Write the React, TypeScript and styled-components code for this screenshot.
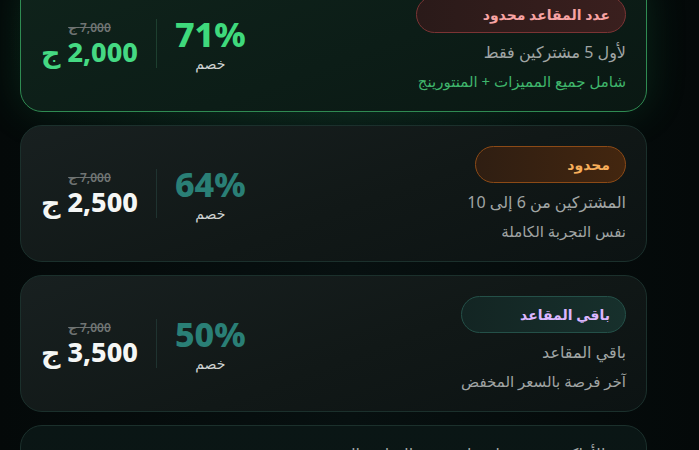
import React from 'react'
import styled, { createGlobalStyle, css } from 'styled-components'

type Tone = 'best' | 'normal'

type Plan = {
  badge: string,
  badgeKind: 'hot' | 'limited' | 'last',
  badgeWidth: number,
  line1: string,
  line2: string,
  discount: string,
  price: string,
  tone: Tone,
}

const plans: Plan[] = [
  {
    badge: 'عدد المقاعد محدود',
    badgeKind: 'hot',
    badgeWidth: 210,
    line1: 'لأول 5 مشتركين فقط',
    line2: 'شامل جميع المميزات + المنتورينج',
    discount: '71%',
    price: '2,000',
    tone: 'best',
  },
  {
    badge: 'محدود',
    badgeKind: 'limited',
    badgeWidth: 151,
    line1: 'المشتركين من 6 إلى 10',
    line2: 'نفس التجربة الكاملة',
    discount: '64%',
    price: '2,500',
    tone: 'normal',
  },
  {
    badge: 'باقي المقاعد',
    badgeKind: 'last',
    badgeWidth: 165,
    line1: 'باقي المقاعد',
    line2: 'آخر فرصة بالسعر المخفض',
    discount: '50%',
    price: '3,500',
    tone: 'normal',
  },
]

const badgeColors = {
  hot: { bg: 'linear-gradient(90deg, #2a1a19, #3a1f1e)', border: '#7b3434', text: '#f7a3a3' },
  limited: { bg: 'linear-gradient(90deg, #2f1e12, #43260f)', border: '#8c4a16', text: '#f7ae5a' },
  last: { bg: 'linear-gradient(90deg, #132523, #17302c)', border: '#245048', text: '#dcb6ff' },
}

export default function App() {
  return (
    <>
      <GlobalStyle />
      <Page dir='rtl'>
        <List>
          {plans.map(p => (
            <Card key={p.price} tone={p.tone}>
              <Info>
                <Badge kind={p.badgeKind} w={p.badgeWidth}>{p.badge}</Badge>
                <Line1>{p.line1}</Line1>
                <Line2 tone={p.tone}>{p.line2}</Line2>
              </Info>

              <Deal>
                <Discount>
                  <Percent tone={p.tone}>{p.discount}</Percent>
                  <Off>خصم</Off>
                </Discount>
                <Divider tone={p.tone} />
                <PriceBox>
                  <OldPrice>7,000 ج</OldPrice>
                  <Price tone={p.tone}>{p.price} ج</Price>
                </PriceBox>
              </Deal>
            </Card>
          ))}

          <Card tone='normal' top>
            <Feature>
              <Check>✓</Check>
              الأماكن محدودة لضمان جودة المتابعة الفردية
            </Feature>
          </Card>
        </List>
      </Page>
    </>
  )
}

const GlobalStyle = createGlobalStyle`
  html, body { margin:0; padding:0; background:#050b0b; overflow:hidden; }
  body { font-family:"Noto Sans", "DejaVu Sans", sans-serif; }
`

const Page = styled.div`
  width:699px; height:450px; overflow:hidden;
  background:
    radial-gradient(ellipse 420px 200px at 300px 40px, rgba(30,110,70,0.22), transparent 70%),
    linear-gradient(90deg, #040909 0%, #071010 50%, #040909 100%);
`

// list is scrolled so the first card sits partly above the fold
const List = styled.div`
  display:flex; flex-direction:column; gap:13px;
  margin-top:-25px; padding:0 52px 0 20px; box-sizing:border-box; width:699px;
`

const Card = styled.div<{ tone: Tone, top?: boolean }>`
  display:flex; align-items:${p => p.top ? 'flex-start' : 'center'}; justify-content:space-between;
  height:137px; box-sizing:border-box; padding:0 20px;
  border-radius:22px; flex-shrink:0;
  border:1px solid #1b302c;
  background:linear-gradient(160deg, #182020 0%, #111817 55%, #0c1313 100%);
  ${p => p.tone == 'best' && css`
    border-color:#2f8b52;
    background:linear-gradient(160deg, #0f231b 0%, #0c1d17 55%, #0a1813 100%);
    box-shadow:0 0 40px rgba(34,160,90,0.18);
  `}
  ${p => p.top && css`
    padding-top:17px;
    background:linear-gradient(180deg, #0a1615 0%, #0c1514 100%);
  `}
`

const Info = styled.div` display:flex; flex-direction:column; align-items:flex-start; `

const Badge = styled.div<{ kind: keyof typeof badgeColors, w: number }>`
  width:${p => p.w}px; height:37px; box-sizing:border-box; padding:0 15px;
  display:flex; align-items:center; border-radius:999px;
  font-size:14px; font-weight:700;
  background:${p => badgeColors[p.kind].bg};
  border:1px solid ${p => badgeColors[p.kind].border};
  color:${p => badgeColors[p.kind].text};
`

const Line1 = styled.div` margin-top:8px; font-size:16px; color:#a0a5a4; line-height:22px; `
const Line2 = styled.div<{ tone: Tone }>`
  margin-top:8px; font-size:15px; line-height:20px;
  color:${p => p.tone == 'best' ? '#3fb56b' : '#a0a4a3'};
`

const Feature = styled.div` display:flex; align-items:center; gap:8px; font-size:16px; color:#a3a8a7; `
const Check = styled.span` color:#7d8584; font-size:15px; `

const Deal = styled.div` display:flex; align-items:center; gap:18px; `

const Discount = styled.div` display:flex; flex-direction:column; align-items:center; `
const Percent = styled.div<{ tone: Tone }>`
  direction:ltr; font-size:34px; font-weight:800; line-height:36px;
  color:${p => p.tone == 'best' ? '#3fd97c' : '#2a7f76'};
`
const Off = styled.div` font-size:14px; line-height:16px; color:#cfd3d2; margin-top:4px; `

const Divider = styled.div<{ tone: Tone }>`
  width:1px; height:49px; background:${p => p.tone == 'best' ? '#1d3f2f' : '#1f3330'};
`

const PriceBox = styled.div` display:flex; flex-direction:column; align-items:center; gap:4px; `
const OldPrice = styled.div`
  font-size:12px; line-height:12px;
  color:#6f7473; text-decoration:line-through; font-weight:600;
`
const Price = styled.div<{ tone: Tone }>`
  font-size:27px; font-weight:800; line-height:28px;
  color:${p => p.tone == 'best' ? '#45d983' : '#f4f6f5'};
`
